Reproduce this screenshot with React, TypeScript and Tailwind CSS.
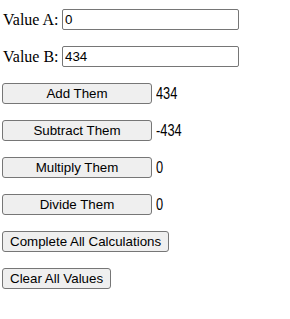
import React, { useState } from 'react';

const btn =
  "h-[21px] border border-[#767676] rounded-[3px] bg-[#efefef] text-black text-[13.333px] leading-none font-['Liberation_Sans',Arial,sans-serif] px-[7px] hover:bg-[#e5e5e5]";

export default function App() {
  const [a, setA] = useState('0');
  const [b, setB] = useState('434');
  const [sum, setSum] = useState('434');
  const [diff, setDiff] = useState('-434');
  const [prod, setProd] = useState('0');
  const [quot, setQuot] = useState('0');

  const na = () => Number(a) || 0;
  const nb = () => Number(b) || 0;

  const add = () => setSum(String(na() + nb()));
  const sub = () => setDiff(String(na() - nb()));
  const mul = () => setProd(String(na() * nb()));
  const div = () => setQuot(String(nb() === 0 ? 0 : na() / nb()));

  const all = () => {
    add();
    sub();
    mul();
    div();
  };

  const clear = () => {
    setA('');
    setB('');
    setSum('');
    setDiff('');
    setProd('');
    setQuot('');
  };

  const results: [string, string, () => void][] = [
    ['Add Them', sum, add],
    ['Subtract Them', diff, sub],
    ['Multiply Them', prod, mul],
    ['Divide Them', quot, div],
  ];

  return (
    <div className="min-h-screen bg-white text-black pl-[2px] pt-[9px] flex flex-col gap-4 font-['Liberation_Serif','Times_New_Roman',serif] text-base">
      {/* inputs */}
      {[
        ['Value A:', a, setA],
        ['Value B:', b, setB],
      ].map(([label, val, set]) => (
        <label key={label as string} className="flex items-center h-[21px]">
          <span className="pl-px w-[60px]">{label as string}</span>
          <input
            value={val as string}
            onChange={(e) => (set as (v: string) => void)(e.target.value)}
            className="w-[177px] h-[21px] border border-[#767676] rounded-[2px] px-[2px] text-[13.333px] font-['Liberation_Sans',Arial,sans-serif] outline-none"
          />
        </label>
      ))}

      {/* operations */}
      {results.map(([label, val, fn]) => (
        <div key={label} className="flex items-center h-[21px]">
          <button onClick={fn} className={btn + ' w-[150px]'}>
            {label}
          </button>
          {/* narrow sans for the results */}
          <span className="ml-[4px] inline-block origin-left scale-x-[0.8] font-['Liberation_Sans',Arial,sans-serif]">
            {val}
          </span>
        </div>
      ))}

      <div className="flex h-[21px]">
        <button onClick={all} className={btn}>
          Complete All Calculations
        </button>
      </div>
      <div className="flex h-[21px]">
        <button onClick={clear} className={btn}>
          Clear All Values
        </button>
      </div>
    </div>
  );
}
